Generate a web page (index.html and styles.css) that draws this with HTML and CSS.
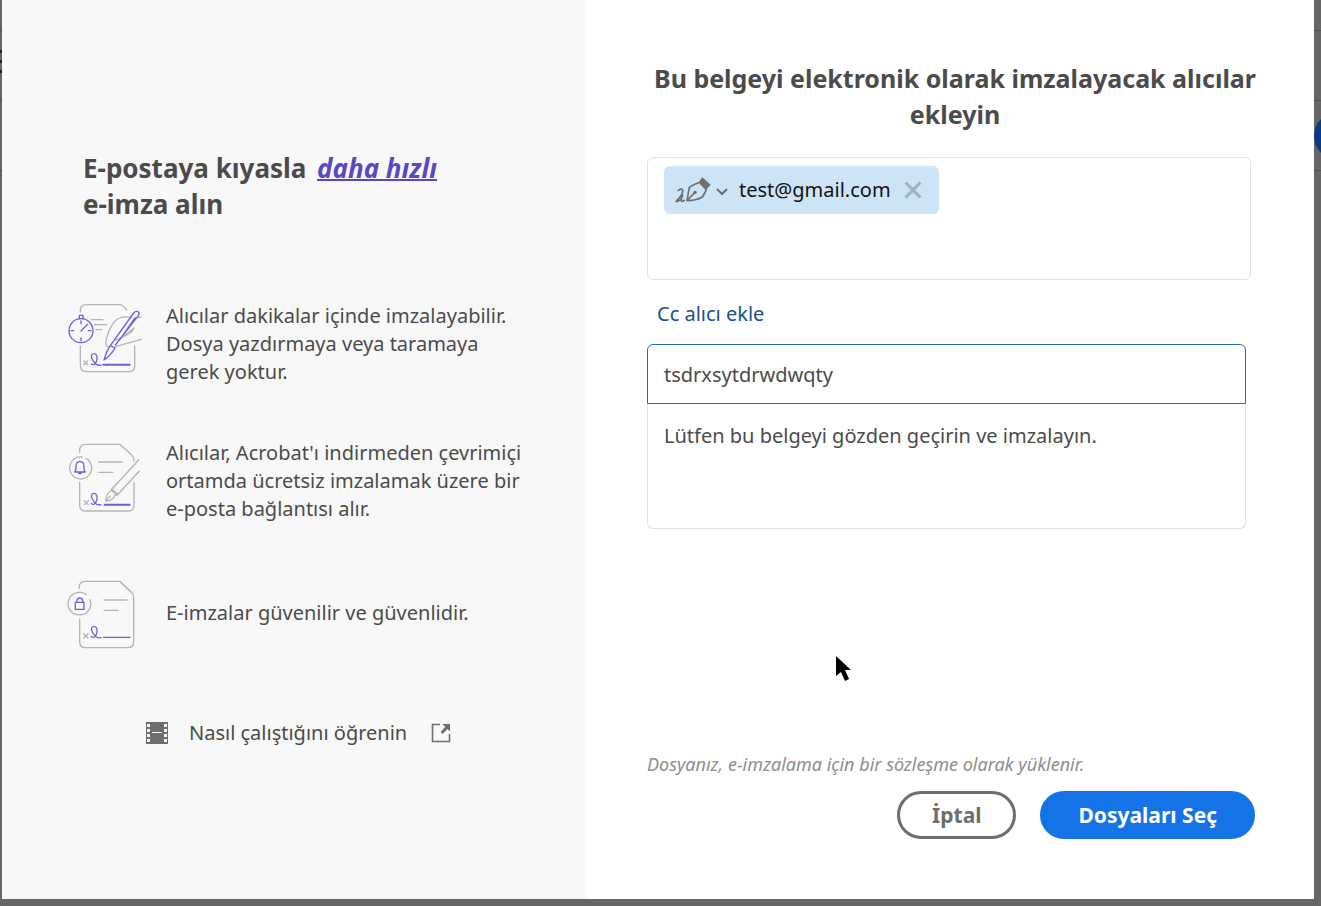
FILE: index.html
```html
<!DOCTYPE html>
<html lang="tr">
<head>
    <meta charset="UTF-8">
    <meta name="viewport" content="width=device-width, initial-scale=1.0">
    <title>E-imza</title>
    <link rel="stylesheet" href="styles.css">
</head>
<body>
    <!-- Dimmed page behind the dialog -->
    <div class="backdrop">
        <span class="menu-dots"></span>
        <span class="line line-1"></span>
        <span class="line line-2"></span>
        <span class="line line-3"></span>
        <span class="round-btn"></span>
    </div>

    <main class="modal">
        <!-- Info panel -->
        <section class="info">
            <h2>E-postaya kıyasla <a class="faster" href="#">daha hızlı</a><br>e-imza alın</h2>

            <ul class="features">
                <li>
                    <svg class="feature-icon" viewBox="18 36 240 219">
                        <g class="gray">
                            <path d="M61 66V61Q61 44 79 44H178Q188 44 200 60M61 168V226Q61 245 79 245H207Q224 245 224 228V168"/>
                            <path d="M94 89H129M104 104H140M108 119H126M72 213L83 224M83 213L72 224"/>
                            <path d="M215 82Q181 77 164 94Q144 119 137 158Q136 169 149 171M243 81L226 84M243 148L166 170M166 151L207 132Q216 126 223 114L192 137"/>
                        </g>
                        <g class="violet">
                            <circle cx="63" cy="122" r="36"/>
                            <path d="M58 86V76H69V86M63 93V101M63 144V152M33 122H41M85 122H93M63 123L83 103"/>
                            <path d="M151 167L221 69Q226 62 234 65Q240 70 235 77L166 165M180 148L225 84M151 167Q138 185 132 210Q153 196 165 174Z"/>
                            <path d="M94 222Q105 229 110 212C113 202 111 191 102 191C93 191 93 201 97 208Q106 224 114 225L123 226"/>
                            <path class="thick" d="M130 224H209"/>
                        </g>
                    </svg>
                    <p>Alıcılar dakikalar içinde imzalayabilir.<br>Dosya yazdırmaya veya taramaya<br>gerek yoktur.</p>
                </li>
                <li>
                    <svg class="feature-icon" viewBox="18 28 240 219">
                        <g class="gray">
                            <path d="M59 68V62Q59 44 77 44H179L215 75Q222 82 222 95M59 158V226Q59 244 77 244H204Q222 244 222 226V158"/>
                            <path d="M116 97H188M116 128H159M73 213L85 225M85 213L73 225"/>
                            <path d="M48 85A33 33 0 1 0 78 86M43 87A33 33 0 0 1 66 82M236 91L153 181L172 196L238 124M153 181Q160 178 172 194Q170 197 164 196M153 184Q139 190 137 214Q156 215 165 198M138 213L151 199"/>
                        </g>
                        <g class="violet">
                            <path d="M44 127Q48 124 48 116V110Q48 96 60 96Q72 96 72 110V116Q72 124 76 127ZM56 130Q60 135 64 130"/>
                            <path d="M94 222Q105 229 110 212C113 202 111 191 102 191C93 191 93 201 97 208Q106 224 114 225L123 226"/>
                            <path class="thick" d="M134 225H209"/>
                        </g>
                    </svg>
                    <p>Alıcılar, Acrobat'ı indirmeden çevrimiçi<br>ortamda ücretsiz imzalamak üzere bir<br>e-posta bağlantısı alır.</p>
                </li>
                <li>
                    <svg class="feature-icon" viewBox="18 33 240 219">
                        <g class="gray">
                            <path d="M58 70V65Q58 49 77 49H180L216 83Q221 88 221 97V230Q221 248 203 248H77Q59 248 59 230V162M181 51L219 87"/>
                            <path d="M132 105H201M132 136H174M71 206L84 219M84 206L71 219"/>
                            <path d="M79 89A34 34 0 1 0 90 104"/>
                        </g>
                        <g class="violet">
                            <path d="M46 112H72V133H46ZM51 111V106Q52 99 59 99Q67 99 68 106V111"/>
                            <path d="M94 215Q105 222 110 205C113 195 111 184 102 184C93 184 93 194 97 201Q106 217 114 218L123 218M130 217H210"/>
                        </g>
                    </svg>
                    <p>E-imzalar güvenilir ve güvenlidir.</p>
                </li>
            </ul>

            <a class="learn" href="#">
                <svg class="film-icon" viewBox="0 0 22 22">
                    <path fill="#6e6e6e" d="M0 0H22V22H0Z"/>
                    <path fill="#f8f8f8" d="M1 2h3v3H1zM1 7h3v3H1zM1 12h3v3H1zM1 17h3v3H1zM18 2h3v3h-3zM18 7h3v3h-3zM18 12h3v3h-3zM18 17h3v3h-3zM6 10h10v1H6z"/>
                </svg>
                <span>Nasıl çalıştığını öğrenin</span>
                <svg class="open-icon" viewBox="0 0 20 20">
                    <path fill="none" stroke="#6e6e6e" stroke-width="1.6" d="M9 1.5H1.5V18.5H18.5V11"/>
                    <path fill="#6e6e6e" d="M11.5 1H19V8.500L16.500 6L11.500 11L9.500 9L14.200 4Z"/>
                </svg>
            </a>
        </section>

        <!-- Recipients form -->
        <form class="sign">
            <h1>Bu belgeyi elektronik olarak imzalayacak alıcılar ekleyin</h1>

            <div class="recipients">
                <div class="chip">
                    <button type="button" class="role" aria-label="İmzalayan">
                        <svg class="pen-icon" viewBox="0 0 108 78">
                            <path fill="none" stroke="#6e6e6e" stroke-width="5" stroke-linejoin="round" d="M8 42Q18 32 23 39Q24 53 6 70Q1 76 8 73Q20 68 23 55Q17 69 19 72Q22 75 29 69M36 71L43 31Q57 22 74 16L94 38Q89 50 82 60Q60 72 36 71ZM38 69L59 47"/>
                            <circle cx="60" cy="46" r="5" fill="#6e6e6e"/>
                            <path fill="#6e6e6e" d="M73 13L82 1L107 23L95 37Z"/>
                        </svg>
                        <svg class="chevron" viewBox="0 0 12 12">
                            <path fill="none" stroke="#6e6e6e" stroke-width="2" d="M1 5L6 10L11 5"/>
                        </svg>
                    </button>
                    <span>test@gmail.com</span>
                    <button type="button" class="remove" aria-label="Kaldır">
                        <svg viewBox="0 0 18 18">
                            <path fill="none" stroke="#a3b1bb" stroke-width="3" d="M1.500 1.500L16.500 16.500M16.500 1.500L1.500 16.500"/>
                        </svg>
                    </button>
                </div>
            </div>

            <a class="cc" href="#">Cc alıcı ekle</a>

            <input class="subject" type="text" aria-label="Konu" value="tsdrxsytdrwdwqty">
            <textarea class="message" aria-label="İleti">Lütfen bu belgeyi gözden geçirin ve imzalayın.</textarea>

            <p class="note">Dosyanız, e-imzalama için bir sözleşme olarak yüklenir.</p>
            <div class="actions">
                <button type="button" class="btn cancel">İptal</button>
                <button type="button" class="btn primary">Dosyaları Seç</button>
            </div>
        </form>

        <svg class="cursor" viewBox="0 0 15 26">
            <path d="M0 0V20L5 16L9 25L13 23L9 14H15Z"/>
        </svg>
    </main>
</body>
</html>
```

FILE: styles.css
```css
:root {
    --text: #4b4b4b;
    --muted: #6e6e6e;
    --violet: #6a62dc;
    --blue: #1473e6;
    --border: #e1e1e1;
}

* {
    box-sizing: border-box;
}

body {
    margin: 0;
    min-height: 100vh;
    padding: 0 7px 7px 2px;
    display: flex;
    position: relative;
    background: #666;
    color: var(--text);
    font-family: "Segoe UI", "Noto Sans", sans-serif;
    font-size: 20px;
    line-height: 28px;
}

h1, h2, p, ul {
    margin: 0;
    padding: 0;
}

h1, h2 {
    font-size: 25px;
    line-height: 36px;
    font-weight: 700;
}

button, input, textarea {
    font: inherit;
    color: inherit;
}

button {
    cursor: pointer;
}

/* Page behind */
.backdrop {
    position: absolute;
    inset: 0;
    overflow: hidden;
}

.line {
    position: absolute;
    left: 0;
    right: 0;
    height: 1px;
    background: #505050;
}

.line-1 { top: 30px; }
.line-2 { top: 100px; }
.line-3 { top: 170px; }

.menu-dots {
    position: absolute;
    left: 0;
    top: 50px;
    width: 2px;
    height: 24px;
    background: repeating-linear-gradient(#222 0 3px, transparent 3px 10px);
}

.round-btn {
    position: absolute;
    top: 112px;
    right: -41px;
    width: 48px;
    height: 48px;
    border-radius: 50%;
    background: #0b3c7d;
}

/* Dialog */
.modal {
    position: relative;
    flex: 1;
    display: grid;
    grid-template-columns: 584fr 728fr;
    background: #fff;
}

.info {
    padding: 150px 40px 40px 64px;
    background: #f8f8f8;
}

.info h2 {
    padding-left: 17px;
    font-size: 26px;
}

.faster {
    margin-left: 4px;
    color: #5a46c6;
    font-style: italic;
    text-decoration-thickness: 2px;
}

.features {
    margin-top: 80px;
    display: flex;
    flex-direction: column;
    gap: 53px;
    list-style: none;
}

.features li {
    display: flex;
    align-items: flex-start;
    gap: 20px;
}

.features p {
    align-self: center;
}

.feature-icon {
    flex: none;
    width: 80px;
    height: 73px;
    fill: none;
    stroke-width: 4;
    stroke-linecap: round;
    stroke-linejoin: round;
}

.gray {
    stroke: #b5b5b3;
}

.violet {
    stroke: var(--violet);
}

.thick {
    stroke-width: 6;
}

.learn {
    display: flex;
    align-items: center;
    margin-top: 70px;
    padding-left: 80px;
    color: var(--text);
    text-decoration: none;
}

.film-icon {
    width: 22px;
    height: 22px;
    margin-right: 21px;
}

.open-icon {
    width: 20px;
    height: 20px;
    margin-left: 24px;
}

.sign {
    display: flex;
    flex-direction: column;
    padding: 60px 51px 60px 61px;
}

.sign h1 {
    text-align: center;
}

.recipients {
    min-height: 123px;
    margin: 25px 12px 20px 0;
    padding: 8px 16px;
    border: 1px solid var(--border);
    border-radius: 6px;
}

.chip {
    display: inline-flex;
    align-items: center;
    height: 48px;
    padding: 0 17px 0 11px;
    border-radius: 6px;
    background: #cde4f6;
    color: #111;
}

.role, .remove {
    display: flex;
    align-items: center;
    padding: 0;
    border: 0;
    background: none;
}

.role {
    gap: 5px;
    margin-right: 11px;
}

.pen-icon {
    width: 36px;
    height: 26px;
}

.chevron {
    width: 12px;
    height: 12px;
}

.remove {
    margin-left: 13px;
}

.remove svg {
    width: 18px;
    height: 18px;
}

.cc {
    align-self: flex-start;
    margin-left: 10px;
    color: #1b4f8c;
    text-decoration: none;
}

.subject, .message {
    margin-right: 17px;
    padding: 0 16px;
    border: 1px solid var(--border);
    outline: none;
    background: #fff;
}

.subject {
    height: 60px;
    margin-top: 16px;
    border: 1px solid #2a6ca8;
    border-radius: 6px 6px 0 0;
}

.message {
    height: 125px;
    padding-top: 18px;
    border-top: 0;
    border-radius: 0 0 6px 6px;
    resize: none;
}

.note {
    margin-top: auto;
    color: #8e8e8e;
    font-size: 18px;
    font-style: italic;
}

.actions {
    display: flex;
    justify-content: flex-end;
    gap: 24px;
    margin: 13px 8px 0 0;
}

.btn {
    height: 48px;
    padding: 0 32px;
    border: 3px solid var(--muted);
    border-radius: 24px;
    background: #fff;
    color: var(--muted);
    font-size: 21px;
    font-weight: 700;
}

.primary {
    padding: 0 35px;
    border-color: var(--blue);
    background: var(--blue);
    color: #fff;
}

/* Mouse pointer */
.cursor {
    position: absolute;
    left: 834px;
    top: 656px;
    width: 15px;
    height: 26px;
}
```
